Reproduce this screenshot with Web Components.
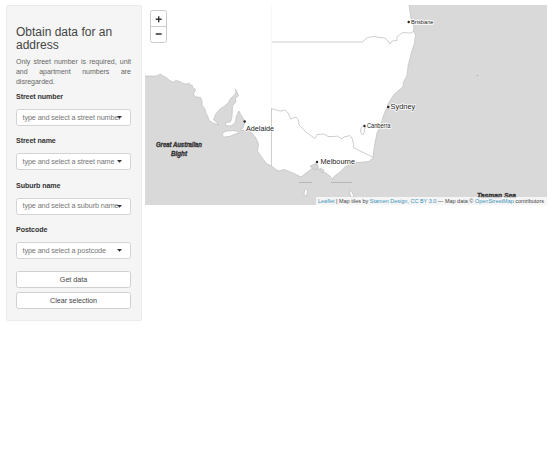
<!DOCTYPE html>
<html lang="en"><head><meta charset="utf-8"><title>Address data</title>
<style>
body{margin:0;background:#fff;color:#333;font:7px/10px "Liberation Sans",Arial,sans-serif}
</style></head><body>
<address-app></address-app>
<script>
const define=(name,html,init)=>customElements.define(name,class extends HTMLElement{
  connectedCallback(){
    if(this.shadowRoot)return;
    this.attachShadow({mode:'open'}).innerHTML=html;
    if(init)init(this,this.shadowRoot);
  }
});

define('select-field',`<style>
:host{display:block;height:44.4px}
label{display:block;font-weight:700;font-size:7.1px;letter-spacing:-.08px;line-height:10px;height:17px;color:#333}
.box{box-sizing:border-box;height:17px;border:1px solid #d4d4d4;border-radius:2.5px;background:#fff;display:flex;align-items:center;justify-content:space-between;padding:0 8px 0 5.5px}
.hint{width:98px;white-space:nowrap;color:#777;font-size:7.3px;letter-spacing:-.13px}
svg{width:5px;height:3px;flex:none;margin-left:-5px}
</style><label><slot></slot></label><div class="box"><span class="hint"></span><svg viewBox="0 0 5 3"><path d="M0 0h5L2.5 2.8z" fill="#333"/></svg></div>`,
(el,root)=>root.querySelector('.hint').textContent=el.getAttribute('hint'));

define('action-button',`<style>
:host{display:block}
button{display:block;box-sizing:border-box;width:100%;height:17px;margin:0;padding:1px 0 0;border:1px solid #d0d0d0;border-radius:2.5px;background:#fff;color:#444;font:7.2px/10px "Liberation Sans",Arial,sans-serif;letter-spacing:-.04px}
</style><button><slot></slot></button>`);

define('search-panel',`<style>
:host{display:block;box-sizing:border-box;width:136px;height:316px;padding:20px 10px 0 9px;background:#f5f5f5;border:1px solid #ebebeb;border-radius:2px}
h2{margin:0;font-size:12px;line-height:13px;font-weight:400;color:#444}
p{margin:5px 0 5px;text-align:justify;font-size:7px;letter-spacing:-.02px;line-height:10px;color:#666}
.buttons{display:grid;gap:4px;margin-top:1.4px}
</style><h2>Obtain data for an address</h2>
<p>Only street number is required, unit and apartment numbers are disregarded.</p>
<select-field hint="type and select a street number">Street number</select-field>
<select-field hint="type and select a street name">Street name</select-field>
<select-field hint="type and select a suburb name">Suburb name</select-field>
<select-field hint="type and select a postcode">Postcode</select-field>
<div class="buttons"><action-button>Get data</action-button><action-button>Clear selection</action-button></div>`);

define('zoom-control',`<style>
:host{display:block;box-sizing:border-box;width:17px;height:33px;border:1px solid #ccc;border-radius:2.5px;background:#fff}
svg{display:block}
</style><svg width="15" height="31" viewBox="0 0 15 31"><path d="M0 15.5h15" stroke="#ccc"/><path d="M4.700 8.300h6M7.700 5.300v6M4.700 23h6" stroke="#333" stroke-width="1.400"/></svg>`);

define('map-credit',`<style>
:host{display:block;box-sizing:border-box;width:231px;height:8px;padding:0 2px;background:#ffffffb8;white-space:nowrap}
svg{display:block}a{fill:#3a93b8}
</style><svg width="229" height="8" font-size="5.500" fill="#444"><text x="0" y="5.500" textLength="226" lengthAdjust="spacingAndGlyphs"><a>Leaflet</a> | Map tiles by <a>Stamen Design, CC BY 3.0</a> — Map data © <a>OpenStreetMap</a> contributors</text></svg>`);

define('coast-map',`<style>
:host{display:block;position:relative;width:402px;height:200px;overflow:hidden;background:#d9d9d9}
.map{display:block}
zoom-control{position:absolute;left:5px;top:5px}
map-credit{position:absolute;right:0;bottom:0}
.land{fill:#fff;stroke:#b9b9b9;stroke-width:.6;stroke-linejoin:round}
.border{fill:none;stroke:#c2c2c2;stroke-width:.8}
.city{fill:#222;stroke:#fff;stroke-width:1.6;paint-order:stroke;stroke-linejoin:round}
.sea{fill:#333;stroke:#333;stroke-width:.35;font-size:7px;font-weight:700;font-style:italic}
.sea .halo{stroke:#f2f2f2;stroke-width:1.2;fill:none}
</style>
<svg class="map" width="402" height="200" viewBox="145 5 402 200">
<path class="land" d="M144 4V76L156 76L158.500 75L160.500 74L162.500 75.500L167 78L169 80L173 82.300L176 80.500L180 81.500L183 83.500L187 84L189 83L190.500 85.500L192 85L193 88L195.500 89.500L194.500 92L193.500 94.500L196 97L200.500 97.300L202 101L202 105L205 109L206 113L208 117L209 120.500L213 123L219 125L213.500 119.500L216 113.500L220 109L224.500 106L228 103L231 98L234.500 95L236 92L235.300 89L237 92L238.500 96L235.500 98L235.800 102L232.500 106L232 117L230.500 122L226 122.500L225.500 125.500L231 126L235 123L236.500 116L239 111L241 115L243.500 119L244.500 123L243 128L240 130L246 131L251 132L256 138L258.500 144L257.500 151L263 159L267 164L271.500 166L278 171L284 169.500L293 173L301 177L306 173L310 170L314 167L315 163.500L317 164L318 169L323 171L330 176L333 180L333.500 177L340 172L345 167L352 163L363 162L369 161.500L373 157.500L373.500 152L375 143L377 133L381 124L384 114L387 108L388 104L391 99L394 94.500L398 91L403 86.500L403.500 82L407 75.500L408 66L411 54L414.500 43L415.500 35L413.500 31L414 27L411 19L410 12L409 4Z"/>
<g class="land"><path d="M222 134l3-2.500 7-1 5 .7 2 2.300-4 .5-5 2.300-6 .7z"/><path d="M305 189l2 0 .5 3-1.500 5-2-3z"/><path d="M349 190l3 2 2 5h-3z"/></g>
<path d="M310 166l4-2 4 1 .5 4-5 1zM320 168l4 2-2 3-2-2z" fill="#d5d5d5" stroke="#bcbcbc" stroke-width=".5"/>
<path d="M272 42H363" fill="none" stroke="#e6e6e6" stroke-width="1.8"/>
<g class="border"><path d="M271.500 5V108" stroke="#f8f8f8"/><path d="M271.500 108V166"/><path d="M271.500 108.500L278 110.500L281 111L285 110L288 113L290.500 119L296 117L298.500 120L299 125L303 129L305 131L310 135L315 138.500L317 134.500L324 134L328 136.500L334 136.500L337 136L342 139L344 137L350 135.500L352.500 139L354 148L373.500 157.500"/><path d="M363 41.500L367.500 37.500L374 36.500L380 37.500L385 38L388 41L390 44L392 41L397 40.500L397 37L400 34.500L403 32.500L408 33L411 33L414 31"/><path d="M361 128l3-3 1 2-.500 5-2 3-2-3z"/></g>
<path d="M299 182.500h13M331 182.500h21" stroke="#b7b7b7" fill="none"/>
<circle cx="477.500" cy="75.500" r=".6" fill="#999"/>
<g fill="#222"><circle cx="408.700" cy="22" r="1.200"/><circle cx="388.200" cy="107" r="1.200"/><circle cx="364.500" cy="126" r="1.200"/><circle cx="244.700" cy="121.500" r="1.200"/><circle cx="317" cy="162" r="1.200"/></g>
<g class="city">
<text x="411" y="23.500" font-size="6" textLength="22.500" lengthAdjust="spacingAndGlyphs">Brisbane</text>
<text x="390.500" y="108.500" font-size="7.900" textLength="24.800" lengthAdjust="spacingAndGlyphs">Sydney</text>
<text x="367" y="128" font-size="6.300" textLength="23.500" lengthAdjust="spacingAndGlyphs">Canberra</text>
<text x="246" y="131" font-size="7.900" textLength="28" lengthAdjust="spacingAndGlyphs">Adelaide</text>
<text x="320.500" y="164" font-size="7.900" textLength="34.500" lengthAdjust="spacingAndGlyphs">Melbourne</text></g>
<g class="sea"><text x="156" y="146.800" textLength="46" lengthAdjust="spacingAndGlyphs">Great Australian</text><text x="171" y="156" textLength="16" lengthAdjust="spacingAndGlyphs">Bight</text><text x="477" y="198" textLength="39" lengthAdjust="spacingAndGlyphs">Tasman Sea</text></g>
</svg><zoom-control></zoom-control><map-credit></map-credit>`);

define('address-app',`<style>
:host{display:flex;align-items:flex-start;box-sizing:border-box;padding:5px 7px 0 6px;gap:3px;height:460px}
</style><search-panel></search-panel><coast-map></coast-map>`);
</script></body></html>
